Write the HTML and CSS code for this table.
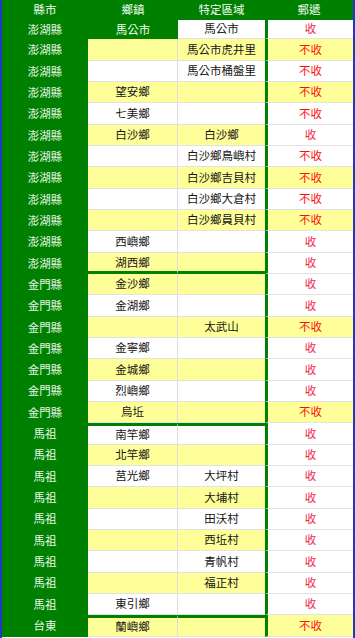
FILE: index.html
```html
<!DOCTYPE html>
<html lang="zh-Hant">
<head>
<meta charset="utf-8">
<title>郵遞</title>
<link rel="stylesheet" href="styles.css">
</head>
<body>
<div class="sheet">
  <div class="row head">
    <div class="c c1">縣市</div><div class="c c2">鄉鎮</div><div class="c c3">特定區域</div><div class="c c4">郵遞</div>
  </div>
  <div class="row first w"><div class="c c1">澎湖縣</div><div class="c c2 g">馬公市</div><div class="c c3">馬公市</div><div class="c c4 ok">收</div></div>
  <div class="row y"><div class="c c1">澎湖縣</div><div class="c c2"></div><div class="c c3">馬公市虎井里</div><div class="c c4 no">不收</div></div>
  <div class="row w"><div class="c c1">澎湖縣</div><div class="c c2"></div><div class="c c3">馬公市桶盤里</div><div class="c c4 no">不收</div></div>
  <div class="row y"><div class="c c1">澎湖縣</div><div class="c c2">望安鄉</div><div class="c c3"></div><div class="c c4 no">不收</div></div>
  <div class="row w"><div class="c c1">澎湖縣</div><div class="c c2">七美鄉</div><div class="c c3"></div><div class="c c4 no">不收</div></div>
  <div class="row y"><div class="c c1">澎湖縣</div><div class="c c2">白沙鄉</div><div class="c c3">白沙鄉</div><div class="c c4 ok">收</div></div>
  <div class="row w"><div class="c c1">澎湖縣</div><div class="c c2"></div><div class="c c3">白沙鄉鳥嶼村</div><div class="c c4 no">不收</div></div>
  <div class="row y"><div class="c c1">澎湖縣</div><div class="c c2"></div><div class="c c3">白沙鄉吉貝村</div><div class="c c4 no">不收</div></div>
  <div class="row w"><div class="c c1">澎湖縣</div><div class="c c2"></div><div class="c c3">白沙鄉大倉村</div><div class="c c4 no">不收</div></div>
  <div class="row y"><div class="c c1">澎湖縣</div><div class="c c2"></div><div class="c c3">白沙鄉員貝村</div><div class="c c4 no">不收</div></div>
  <div class="row w"><div class="c c1">澎湖縣</div><div class="c c2">西嶼鄉</div><div class="c c3"></div><div class="c c4 ok">收</div></div>
  <div class="row y last"><div class="c c1">澎湖縣</div><div class="c c2">湖西鄉</div><div class="c c3"></div><div class="c c4 ok">收</div></div>
  <div class="row y"><div class="c c1">金門縣</div><div class="c c2">金沙鄉</div><div class="c c3"></div><div class="c c4 ok">收</div></div>
  <div class="row w"><div class="c c1">金門縣</div><div class="c c2">金湖鄉</div><div class="c c3"></div><div class="c c4 ok">收</div></div>
  <div class="row y"><div class="c c1">金門縣</div><div class="c c2"></div><div class="c c3">太武山</div><div class="c c4 no">不收</div></div>
  <div class="row w"><div class="c c1">金門縣</div><div class="c c2">金寧鄉</div><div class="c c3"></div><div class="c c4 ok">收</div></div>
  <div class="row y"><div class="c c1">金門縣</div><div class="c c2">金城鄉</div><div class="c c3"></div><div class="c c4 ok">收</div></div>
  <div class="row w"><div class="c c1">金門縣</div><div class="c c2">烈嶼鄉</div><div class="c c3"></div><div class="c c4 ok">收</div></div>
  <div class="row y"><div class="c c1">金門縣</div><div class="c c2">烏坵</div><div class="c c3"></div><div class="c c4 no">不收</div></div>
  <div class="row w group"><div class="c c1">馬祖</div><div class="c c2">南竿鄉</div><div class="c c3"></div><div class="c c4 ok">收</div></div>
  <div class="row y"><div class="c c1">馬祖</div><div class="c c2">北竿鄉</div><div class="c c3"></div><div class="c c4 ok">收</div></div>
  <div class="row w"><div class="c c1">馬祖</div><div class="c c2">莒光鄉</div><div class="c c3">大坪村</div><div class="c c4 ok">收</div></div>
  <div class="row y"><div class="c c1">馬祖</div><div class="c c2"></div><div class="c c3">大埔村</div><div class="c c4 ok">收</div></div>
  <div class="row w"><div class="c c1">馬祖</div><div class="c c2"></div><div class="c c3">田沃村</div><div class="c c4 ok">收</div></div>
  <div class="row y"><div class="c c1">馬祖</div><div class="c c2"></div><div class="c c3">西坵村</div><div class="c c4 ok">收</div></div>
  <div class="row w"><div class="c c1">馬祖</div><div class="c c2"></div><div class="c c3">青帆村</div><div class="c c4 ok">收</div></div>
  <div class="row y"><div class="c c1">馬祖</div><div class="c c2"></div><div class="c c3">福正村</div><div class="c c4 ok">收</div></div>
  <div class="row w"><div class="c c1">馬祖</div><div class="c c2">東引鄉</div><div class="c c3"></div><div class="c c4 ok">收</div></div>
  <div class="row y group"><div class="c c1">台東</div><div class="c c2">蘭嶼鄉</div><div class="c c3"></div><div class="c c4 no">不收</div></div>
</div>
</body>
</html>
```

FILE: styles.css
```css
html, body {
  margin: 0;
  padding: 0;
  background: #ffffff;
}
body {
  font-family: "Noto Sans CJK TC", "Noto Sans CJK SC", sans-serif;
  font-size: 11.5px;
  color: #141414;
  overflow: hidden;
}
.sheet {
  width: 355px;
  height: 638px;
  box-sizing: border-box;
  border-left: 2px solid #2436c8;
  border-right: 2px solid #2436c8;
  display: flex;
  flex-direction: column;
  overflow: hidden;
}
.row {
  display: grid;
  grid-template-columns: 86px 90px 87px 88px;
  height: 21.33px;
  flex: none;
}
.row.head {
  height: 20px;
  background: #008000;
}
.row.first {
  height: 19.33px;
}
.c {
  box-sizing: border-box;
  display: flex;
  align-items: center;
  justify-content: center;
  line-height: 1;
  white-space: nowrap;
}
.head .c {
  color: #f4fff4;
  background: #008000;
}
.c1 {
  background: #008000;
  color: #e6f5e6;
}
.c2, .c3, .c4 {
  border-bottom: 1px solid #e2e2e2;
}
.c2 {
  border-right: 1px solid #dcdcdc;
}
.c4 {
  border-left: 3px solid #008000;
  background: #ffffff;
}
.head .c2, .head .c3, .head .c4 {
  border: none;
}
.y .c2, .y .c3 {
  background: #ffff99;
}
.w .c2, .w .c3 {
  background: #ffffff;
}
.y .c4.no {
  background: #ffff99;
}
.c2.g {
  background: #008000;
  color: #f4fff4;
  border-right: none;
  border-bottom: none;
}
.ok {
  color: #ee2a4e;
}
.no {
  color: #ff1010;
}
.group .c2, .group .c3 {
  border-top: 3px solid #008000;
}
.last .c2, .last .c3 {
  border-bottom: 3px solid #008000;
  padding-top: 2px;
}
```
